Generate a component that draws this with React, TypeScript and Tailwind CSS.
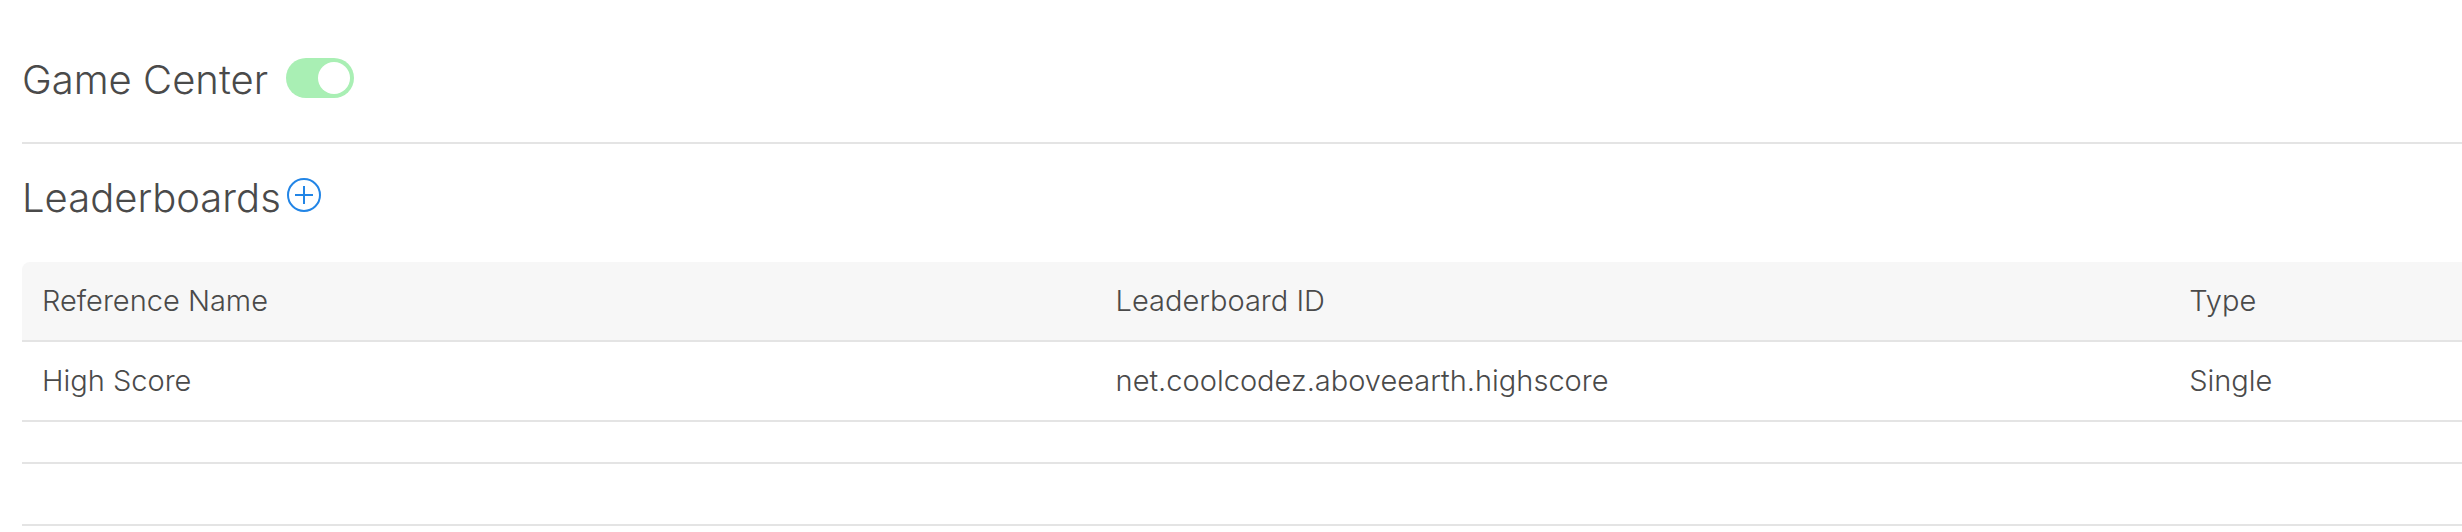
import { useState } from 'react';

type Leaderboard = {
  referenceName: string;
  leaderboardId: string;
  type: string;
};

const leaderboards: Leaderboard[] = [
  {
    referenceName: 'High Score',
    leaderboardId: 'net.coolcodez.aboveearth.highscore',
    type: 'Single',
  },
];

function PlusCircleIcon() {
  return (
    <svg
      viewBox="0 0 34 34"
      className="size-[34px]"
      fill="none"
      stroke="currentColor"
      strokeWidth="2"
      aria-hidden="true"
    >
      <circle cx="17" cy="17" r="16" />
      <path d="M17 8v18M8 17h18" />
    </svg>
  );
}

export default function App() {
  const [enabled, setEnabled] = useState(true);

  return (
    <main className="pt-[50px] pl-[22px] font-['Inter','Liberation_Sans',sans-serif] font-light text-[#4a4a4a]">
      <section className="flex items-start gap-[18px] border-b-2 border-[#e4e4e4] pb-8">
        <h2 className="text-[40px] leading-[60px]">
          <label htmlFor="game-center">Game Center</label>
        </h2>
        <input
          id="game-center"
          type="checkbox"
          role="switch"
          checked={enabled}
          onChange={(e) => setEnabled(e.target.checked)}
          className="mt-2 flex h-10 w-[68px] shrink-0 appearance-none items-center rounded-full bg-gray-200 px-1 before:size-8 before:rounded-full before:bg-white before:content-[''] checked:justify-end checked:bg-[#a9efb4]"
        />
      </section>

      <section className="border-b-2 border-[#e4e4e4] pt-6 pb-10">
        <div className="mb-[34px] flex items-start gap-1.5">
          <h2 className="text-[40px] leading-[60px]">Leaderboards</h2>
          <button type="button" aria-label="Add leaderboard" className="mt-[10px] text-[#2285e6]">
            <PlusCircleIcon />
          </button>
        </div>

        <table className="w-full table-fixed border-separate border-spacing-0 text-left text-[29px] leading-[38px]">
          <thead>
            <tr>
              <th className="w-[44%] rounded-tl-lg border-b-2 border-[#e4e4e4] bg-[#f7f7f7] px-5 py-5 font-light">
                Reference Name
              </th>
              <th className="w-[44%] border-b-2 border-[#e4e4e4] bg-[#f7f7f7] px-5 py-5 font-light">
                Leaderboard ID
              </th>
              <th className="w-[12%] border-b-2 border-[#e4e4e4] bg-[#f7f7f7] px-5 py-5 font-light">
                Type
              </th>
            </tr>
          </thead>
          <tbody>
            {leaderboards.map((row) => (
              <tr key={row.leaderboardId}>
                <td className="border-b-2 border-[#e4e4e4] px-5 py-5">{row.referenceName}</td>
                <td className="border-b-2 border-[#e4e4e4] px-5 py-5">{row.leaderboardId}</td>
                <td className="border-b-2 border-[#e4e4e4] px-5 py-5">{row.type}</td>
              </tr>
            ))}
          </tbody>
        </table>
      </section>

      <hr className="mt-[60px] border-t-2 border-[#e4e4e4]" />
    </main>
  );
}
